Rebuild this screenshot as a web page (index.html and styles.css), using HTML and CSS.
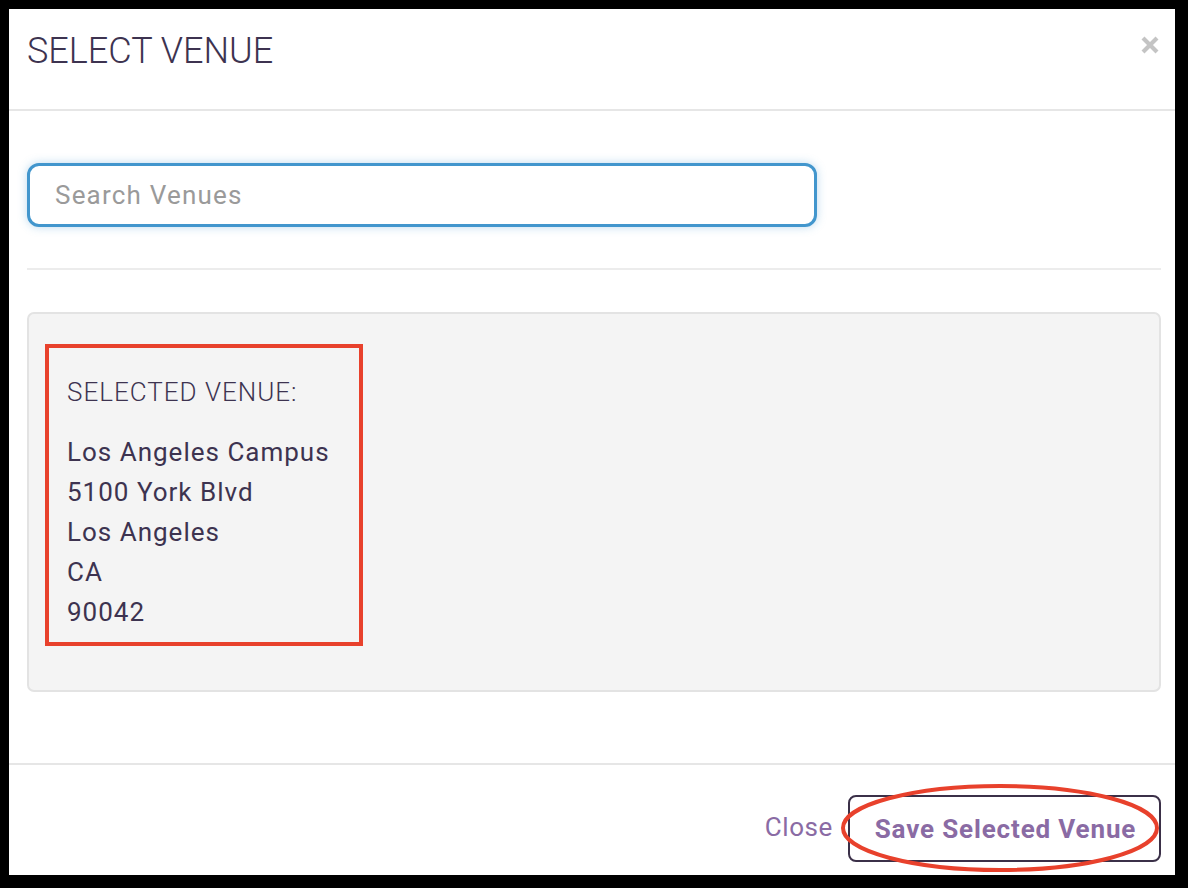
FILE: index.html
```html
<!DOCTYPE html>
<html lang="en">
<head>
    <meta charset="UTF-8">
    <title>Select Venue</title>
    <link rel="stylesheet" href="styles.css">
</head>
<body>
    <div class="modal">
        <div class="modal-header">
            <h2 class="modal-title">SELECT VENUE</h2>
            <button class="close-x" aria-label="Close">
                <svg width="20" height="20" viewBox="0 0 20 20">
                    <path d="M3 3 L17 17 M17 3 L3 17" stroke="#c4c4c4" stroke-width="4.2" stroke-linecap="butt"/>
                </svg>
            </button>
        </div>
        <div class="modal-body">
            <input class="search" type="text" placeholder="Search Venues">
            <div class="divider"></div>
            <div class="venue-panel">
                <div class="venue-box">
                    <div class="venue-label">SELECTED VENUE:</div>
                    <div class="venue-address">
                        <div>Los Angeles Campus</div>
                        <div>5100 York Blvd</div>
                        <div>Los Angeles</div>
                        <div>CA</div>
                        <div>90042</div>
                    </div>
                </div>
            </div>
        </div>
        <div class="modal-footer">
            <a class="close-link" href="#">Close</a>
            <div class="save-wrap">
                <button class="save-btn">Save Selected Venue</button>
                <svg class="ring" width="330" height="96" viewBox="0 0 330 96">
                    <ellipse cx="165" cy="48" rx="157" ry="42" fill="none" stroke="#e8412c" stroke-width="4"/>
                </svg>
            </div>
        </div>
    </div>
</body>
</html>
```

FILE: styles.css
```css
* {
    box-sizing: border-box;
}
body {
    margin: 0;
    background: #000;
    padding: 9px 13px 13px 9px;
    font-family: Roboto, "Liberation Sans", sans-serif;
    color: #3d3350;
}
.modal {
    background: #fff;
    height: 866px;
    display: flex;
    flex-direction: column;
}
.modal-header {
    height: 102px;
    padding: 21px 15px 0 18px;
    border-bottom: 2px solid #e6e6e6;
    display: flex;
    justify-content: space-between;
    align-items: flex-start;
}
.modal-title {
    margin: 0;
    font-size: 36px;
    font-weight: 300;
    line-height: 43px;
    color: #3d3350;
}
.close-x {
    border: none;
    background: none;
    padding: 0;
    margin-top: 5px;
    width: 20px;
    height: 20px;
    cursor: pointer;
}
.modal-body {
    flex: 1;
    padding: 52px 14px 0 18px;
    display: flex;
    flex-direction: column;
}
.search {
    width: 790px;
    height: 64px;
    border: 3px solid #4296cd;
    border-radius: 12px;
    box-shadow: 0 0 10px rgba(66, 150, 205, 0.35);
    padding: 0 25px;
    font-family: inherit;
    font-size: 26px;
    letter-spacing: 1.2px;
    color: #3d3350;
    outline: none;
}
.search::placeholder {
    color: #9a9a9a;
}
.divider {
    height: 2px;
    background: #ececec;
    margin: 41px 0 42px;
}
.venue-panel {
    height: 380px;
    background: #f4f4f4;
    border: 2px solid #e3e3e3;
    border-radius: 7px;
    padding: 30px 16px;
}
.venue-box {
    width: 318px;
    border: 4px solid #e8412c;
    padding: 24px 18px 10px;
}
.venue-label {
    font-size: 26px;
    font-weight: 300;
    line-height: 40px;
    letter-spacing: 1px;
    margin-bottom: 20px;
}
.venue-address {
    font-size: 26px;
    line-height: 40px;
    letter-spacing: 1px;
}
.modal-footer {
    border-top: 2px solid #e6e6e6;
    height: 112px;
    padding: 30px 14px 13px 0;
    display: flex;
    justify-content: flex-end;
    align-items: center;
    gap: 15px;
}
.close-link {
    font-size: 26px;
    letter-spacing: 0.6px;
    color: #8a6ba4;
    text-decoration: none;
    margin-bottom: 4px;
}
.save-wrap {
    position: relative;
}
.save-btn {
    height: 67px;
    width: 313px;
    background: #fff;
    border: 2px solid #3b3048;
    border-radius: 8px;
    font-family: inherit;
    font-size: 26px;
    font-weight: 700;
    letter-spacing: 0.85px;
    color: #8a6ba4;
    padding: 0 0 0 2px;
    cursor: pointer;
}
.ring {
    position: absolute;
    left: -13px;
    top: -15px;
    pointer-events: none;
}
```
